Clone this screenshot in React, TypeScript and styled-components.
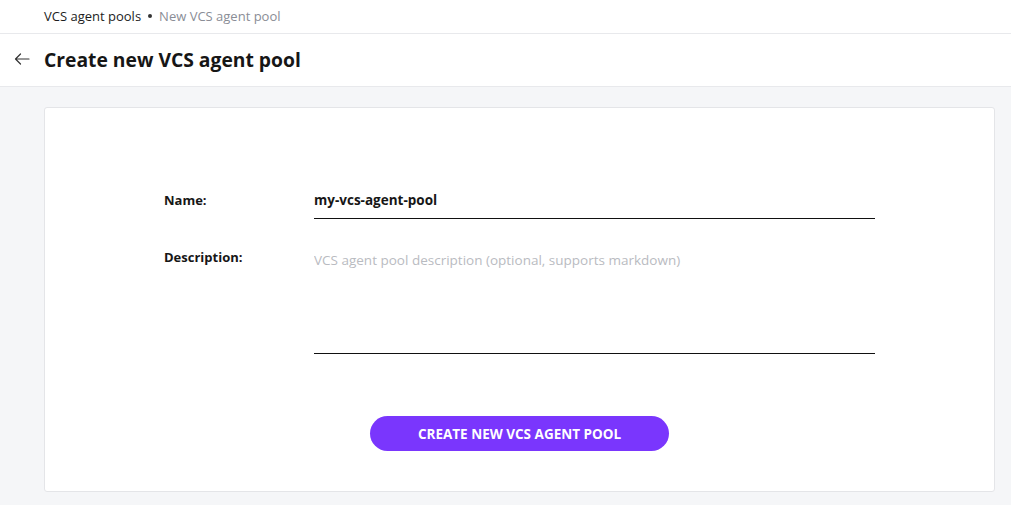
import React from "react";
import styled, { createGlobalStyle } from "styled-components";

const Global = createGlobalStyle`
  html, body { margin: 0; padding: 0; }
  body {
    font-family: "Open Sans", "Noto Sans", sans-serif;
    color: #1a1a1a;
    background: #f5f6f8;
  }
  * { box-sizing: border-box; }
`;

const Page = styled.div`
  width: 1011px;
  height: 505px;
  display: flex;
  flex-direction: column;
  background: #f5f6f8;
  overflow: hidden;
`;

const Breadcrumbs = styled.nav`
  height: 34px;
  display: flex;
  align-items: center;
  gap: 7px;
  padding: 0 0 2px 44px;
  background: #fff;
  border-bottom: 1px solid #e8e9ec;
  font-size: 13px;
`;

const Crumb = styled.span<{ $muted?: boolean }>`
  color: ${(p) => (p.$muted ? "#8a8d96" : "#1c1c1c")};
`;

const Dot = styled.span`
  width: 4px;
  height: 4px;
  border-radius: 50%;
  background: #333;
`;

const Header = styled.header`
  height: 53px;
  display: flex;
  align-items: center;
  background: #fff;
  border-bottom: 1px solid #e8e9ec;
  padding-bottom: 2px;
`;

const BackButton = styled.button`
  width: 44px;
  height: 100%;
  border: 0;
  background: transparent;
  padding: 0 0 0 14px;
  display: flex;
  align-items: center;
  cursor: pointer;
`;

const Title = styled.h1`
  margin: 0;
  font-size: 19.3px;
  font-weight: 700;
  color: #161616;
`;

const Content = styled.main`
  flex: 1;
  padding: 20px 16px 0 44px;
`;

const Card = styled.section`
  width: 951px;
  height: 385px;
  background: #fff;
  border: 1px solid #e4e5e8;
  border-radius: 3px;
  display: flex;
  flex-direction: column;
  align-items: center;
  padding-top: 79px;
`;

const Form = styled.form`
  width: 711px;
  display: flex;
  flex-direction: column;
  gap: 25px;
`;

const Row = styled.div`
  display: grid;
  grid-template-columns: 150px 1fr;
  align-items: start;
`;

const Label = styled.label`
  font-size: 13px;
  font-weight: 700;
  color: #161616;
  padding-top: 4px;
`;

const Input = styled.input`
  width: 561px;
  height: 32px;
  border: 0;
  border-bottom: 1px solid #111;
  outline: none;
  padding: 0 0 6px 0;
  font-family: inherit;
  font-size: 13.5px;
  font-weight: 700;
  color: #161616;
  background: transparent;
`;

const TextArea = styled.textarea`
  width: 561px;
  height: 110px;
  border: 0;
  border-bottom: 1px solid #111;
  outline: none;
  resize: none;
  padding: 7px 0 0 0;
  font-family: inherit;
  font-size: 13.5px;
  color: #161616;
  background: transparent;
  &::placeholder { color: #b9bbc1; }
`;

const Actions = styled.div`
  display: flex;
  justify-content: center;
  margin-top: 37px;
`;

const Primary = styled.button`
  width: 299px;
  height: 35px;
  border: 0;
  border-radius: 18px;
  background: #7a36fd;
  color: #fff;
  font-family: inherit;
  font-size: 13.5px;
  font-weight: 700;
  text-transform: uppercase;
  cursor: pointer;
`;

export default function App() {
  return (
    <Page>
      <Global />
      <Breadcrumbs>
        <Crumb>VCS agent pools</Crumb>
        <Dot />
        <Crumb $muted>New VCS agent pool</Crumb>
      </Breadcrumbs>
      <Header>
        <BackButton aria-label="Back">
          <svg width="16" height="12" viewBox="0 0 16 12" fill="none">
            <path d="M15 6H1.5M6.5 1L1.5 6l5 5" stroke="#333" strokeWidth="1.2" strokeLinecap="round" strokeLinejoin="round" />
          </svg>
        </BackButton>
        <Title>Create new VCS agent pool</Title>
      </Header>
      <Content>
        <Card>
          <Form onSubmit={(e) => e.preventDefault()}>
            <Row>
              <Label htmlFor="name">Name:</Label>
              <Input id="name" defaultValue="my-vcs-agent-pool" />
            </Row>
            <Row>
              <Label htmlFor="desc">Description:</Label>
              <TextArea id="desc" placeholder="VCS agent pool description (optional, supports markdown)" />
            </Row>
            <Actions>
              <Primary type="submit">Create new VCS agent pool</Primary>
            </Actions>
          </Form>
        </Card>
      </Content>
    </Page>
  );
}
